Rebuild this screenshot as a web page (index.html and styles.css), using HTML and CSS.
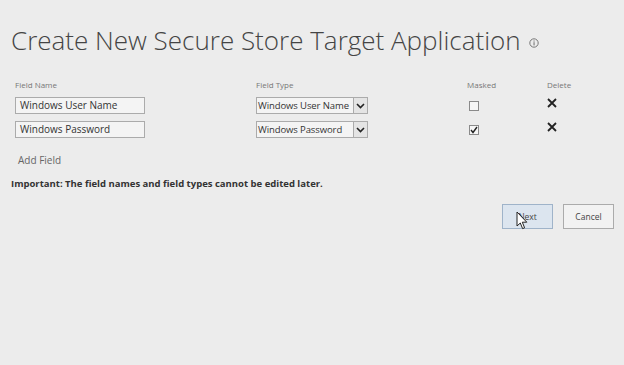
FILE: index.html
```html
<!DOCTYPE html>
<html lang="en">
<head>
    <meta charset="UTF-8">
    <title>Create New Secure Store Target Application</title>
    <link rel="stylesheet" href="styles.css">
</head>
<body>

<div class="page">
    <h1 class="title">Create New Secure Store Target Application
        <svg class="info" width="10" height="10" viewBox="0 0 10 10">
            <circle cx="5" cy="5" r="4.2" fill="none" stroke="#777" stroke-width="1"/>
            <rect x="4.5" y="4.2" width="1.1" height="3.2" fill="#777"/>
            <rect x="4.5" y="2.5" width="1.1" height="1.1" fill="#777"/>
        </svg>
    </h1>

    <div class="fields">
        <div class="head">Field Name</div>
        <div class="head">Field Type</div>
        <div class="head">Masked</div>
        <div class="head">Delete</div>

        <div><div class="textbox">Windows User Name</div></div>
        <div>
            <div class="select">
                <span class="select-text">Windows User Name</span>
                <span class="select-btn"><svg width="9" height="6" viewBox="0 0 9 6"><path d="M1 1 L4.5 4.5 L8 1" fill="none" stroke="#222" stroke-width="1.6"/></svg></span>
            </div>
        </div>
        <div><span class="check"></span></div>
        <div><svg class="del" width="10" height="10" viewBox="0 0 10 10"><path d="M1 1 L9 9 M9 1 L1 9" stroke="#222" stroke-width="1.8"/></svg></div>

        <div><div class="textbox">Windows Password</div></div>
        <div>
            <div class="select">
                <span class="select-text">Windows Password</span>
                <span class="select-btn"><svg width="9" height="6" viewBox="0 0 9 6"><path d="M1 1 L4.5 4.5 L8 1" fill="none" stroke="#222" stroke-width="1.6"/></svg></span>
            </div>
        </div>
        <div><span class="check"><svg width="8" height="8" viewBox="0 0 8 8"><path d="M1 4 L3 6.5 L7 1" fill="none" stroke="#222" stroke-width="1.4"/></svg></span></div>
        <div><svg class="del" width="10" height="10" viewBox="0 0 10 10"><path d="M1 1 L9 9 M9 1 L1 9" stroke="#222" stroke-width="1.8"/></svg></div>
    </div>

    <div class="add-field">Add Field</div>

    <p class="important">Important: The field names and field types cannot be edited later.</p>

    <div class="buttons">
        <div class="btn btn-next">Next
            <svg class="cursor" width="12" height="19" viewBox="0 0 12 19">
                <path d="M1 1 L1 15 L4.3 12 L6.6 17.6 L8.6 16.8 L6.3 11.2 L10.8 11.2 Z" fill="#fff" stroke="#222" stroke-width="1"/>
            </svg>
        </div>
        <div class="btn">Cancel</div>
    </div>
</div>

</body>
</html>
```

FILE: styles.css
```css
body {
    margin: 0;
    padding: 0;
    background-color: #ECECEC;
    font-family: "Open Sans", "Noto Sans", sans-serif;
    color: #444;
}
.page {
    width: 624px;
    height: 365px;
    box-sizing: border-box;
    padding: 22px 10px 0 11px;
}
.title {
    margin: 0;
    font-size: 26px;
    font-weight: 300;
    line-height: 36px;
    color: #444;
    display: flex;
    align-items: center;
    gap: 8px;
}
.info {
    margin-top: 6px;
}
.fields {
    display: grid;
    grid-template-columns: 241px 211px 80px auto;
    grid-template-rows: 18px 24px 24px;
    margin: 21px 0 0 4px;
}
.fields .head {
    font-size: 8px;
    color: #777;
    line-height: 12px;
}
.fields > div {
    display: flex;
    align-items: flex-start;
}
.textbox {
    width: 130px;
    height: 17px;
    box-sizing: border-box;
    border: 1px solid #ababab;
    background-color: #F4F4F4;
    font-size: 10px;
    line-height: 15px;
    padding-left: 4px;
    color: #333;
}
.select {
    width: 112px;
    height: 17px;
    box-sizing: border-box;
    border: 1px solid #ababab;
    background-color: #F4F4F4;
    display: flex;
    font-size: 9.5px;
    line-height: 15px;
    color: #333;
}
.select-text {
    flex: 1;
    padding-left: 1px;
    white-space: nowrap;
    letter-spacing: -0.1px;
}
.select-btn {
    width: 13px;
    border-left: 1px solid #ababab;
    background-color: #E4E4E4;
    display: flex;
    align-items: center;
    justify-content: center;
}
.check {
    width: 10px;
    height: 10px;
    box-sizing: border-box;
    border: 1px solid #8a8a8a;
    background-color: #F6F6F6;
    margin: 4px 0 0 2px;
    display: flex;
    align-items: center;
    justify-content: center;
}
.del {
    margin: 1px 0 0 0;
}
.add-field {
    margin: 8px 0 0 7px;
    font-size: 10px;
    color: #666;
}
.important {
    margin: 10px 0 0 0;
    font-size: 9.5px;
    font-weight: bold;
    color: #333;
}
.buttons {
    display: flex;
    justify-content: flex-end;
    gap: 10px;
    margin-top: 14px;
}
.btn {
    width: 51px;
    height: 25px;
    box-sizing: border-box;
    border: 1px solid #ababab;
    background-color: #F2F2F2;
    font-size: 8.5px;
    color: #444;
    display: flex;
    align-items: center;
    justify-content: center;
    position: relative;
}
.btn-next {
    background-color: #DCE5EF;
    border-color: #9fb3c9;
}
.cursor {
    position: absolute;
    left: 13px;
    top: 6px;
}
```
